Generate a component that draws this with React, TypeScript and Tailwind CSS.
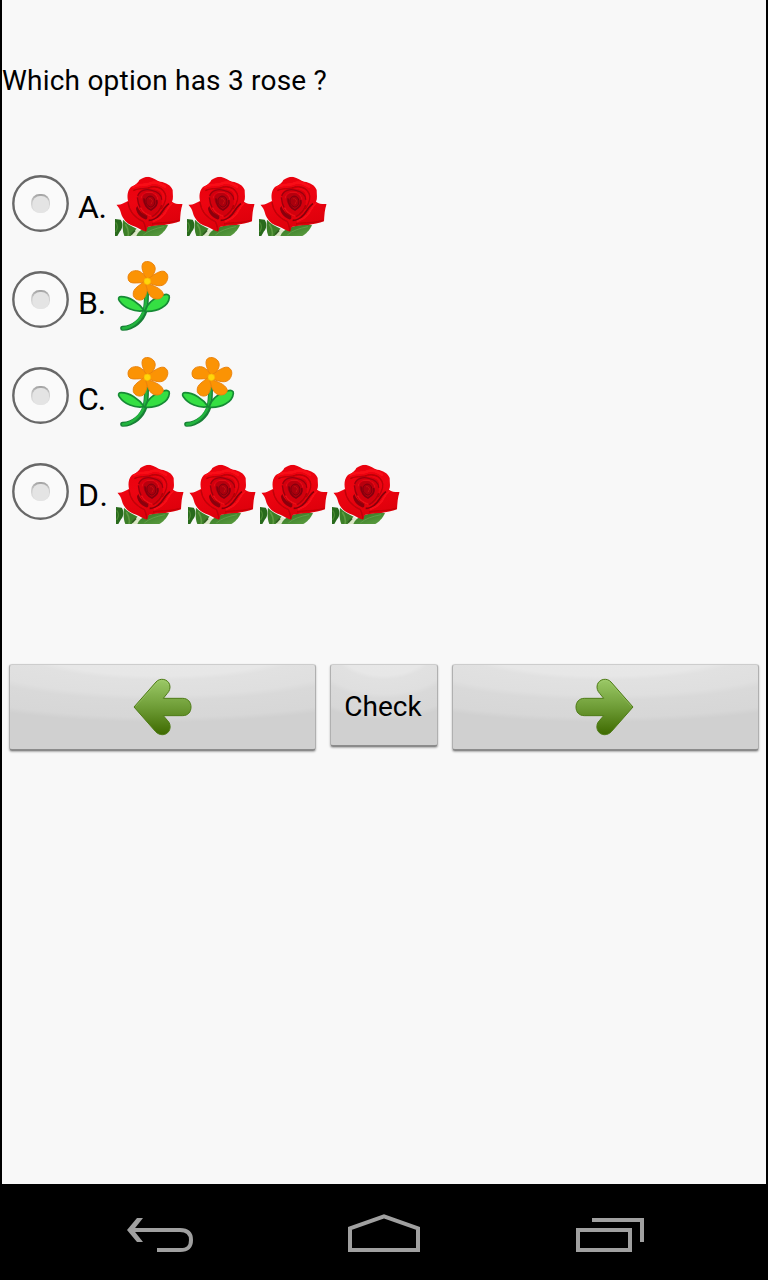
import React from "react";

function Rose() {
  return (
    <svg width="72" height="60" viewBox="15 18 216 180" className="block shrink-0">
      <defs>
        <linearGradient id="petal" x1="0" y1="0" x2="0.3" y2="1">
          <stop offset="0" stopColor="#e8000c" />
          <stop offset="0.5" stopColor="#ed0411" />
          <stop offset="1" stopColor="#de000b" />
        </linearGradient>
        <linearGradient id="roseLeaf" x1="0" y1="0" x2="1" y2="1">
          <stop offset="0" stopColor="#2f7420" />
          <stop offset="1" stopColor="#5fa043" />
        </linearGradient>
        <filter id="petalSoft" x="-10%" y="-10%" width="120%" height="120%">
          <feGaussianBlur stdDeviation="2" />
        </filter>
        <clipPath id="roseOutline">
          <path d="M62 52C72 46 82 42 88 30C98 25 108 19 118 21C131 24 140 32 151 35C167 37 184 46 188 60C188 74 191 86 186 95C196 102 207 103 218 102C212 116 211 137 210 154C197 160 176 163 163 165C143 164 129 168 113 171L108 185C98 181 86 175 76 170C59 165 47 157 39 143C31 132 35 120 19 104C31 106 43 98 54 93C51 78 52 64 62 52Z" />
        </clipPath>
      </defs>
      <path d="M15 147L32 149C39 158 39 175 30 184L22 198H15Z" fill="#286a1c" />
      <path d="M17 157C25 166 23 176 17 186" fill="none" stroke="#4b8a33" strokeWidth="4" />
      <path d="M39 149C48 160 64 168 80 176L66 198H43C37 184 37 166 39 149Z" fill="#3c7f27" />
      <path d="M46 162C53 173 58 184 54 198" fill="none" stroke="#5d9941" strokeWidth="5" />
      <path d="M62 198L79 176L98 185L90 198Z" fill="#dce7c8" />
      <path d="M63 194L75 181" stroke="#315e21" strokeWidth="5" />
      <path d="M79 198C89 174 124 162 174 165C167 181 155 193 145 198Z" fill="url(#roseLeaf)" />
      <path d="M100 195C115 182 136 175 162 170" fill="none" stroke="#609d48" strokeWidth="3" />
      <g clipPath="url(#roseOutline)">
        <path d="M15 18H220V190H15Z" fill="url(#petal)" />
        <g filter="url(#petalSoft)">
          <path d="M54 96C56 115 68 140 100 155C106 164 105 174 109 184" fill="none" stroke="#bd0008" strokeWidth="4" />
          <path d="M84 72C97 48 124 54 141 61C158 65 159 83 154 103C149 126 126 145 112 139C93 127 78 96 84 72Z" fill="#d30009" />
          <path d="M70 62C88 52 107 60 123 51C141 48 156 53 165 70C172 84 163 103 154 117" fill="none" stroke="#b90008" strokeWidth="4" />
          <path d="M66 52C85 39 102 49 119 41C134 34 151 40 168 52" fill="none" stroke="#f90d19" strokeWidth="8" />
          <path d="M83 78C89 60 109 56 125 61C144 65 155 75 155 89M82 82C84 108 97 132 114 137" fill="none" stroke="#9a000a" strokeWidth="4" />
          <path d="M96 77C103 61 125 63 139 75C148 89 141 111 125 120C106 117 96 98 96 77Z" fill="#b80009" />
          <path d="M94 86C94 72 104 67 117 66C133 66 145 79 143 91" fill="none" stroke="#df0713" strokeWidth="5" />
          <path d="M102 85C101 103 113 116 123 120C137 112 143 100 140 90" fill="none" stroke="#83000a" strokeWidth="5" />
          <path d="M109 86C116 73 133 78 134 91C137 103 129 111 121 111C110 107 105 95 109 86Z" fill="#a90009" stroke="#7a020a" strokeWidth="3" />
          <path d="M117 87C127 83 130 95 122 103" fill="none" stroke="#c70e17" strokeWidth="3" />
          <path d="M82 108C87 123 98 132 111 138C114 145 111 149 105 148C89 141 80 130 78 115Z" fill="#8b0008" />
          <path d="M91 112C98 127 109 134 124 139" fill="none" stroke="#e90915" strokeWidth="5" />
          <path d="M177 101C162 109 159 128 142 141C134 149 125 151 116 151" fill="none" stroke="#860008" strokeWidth="5" />
          <path d="M187 99C175 107 172 121 161 134C151 145 140 151 128 155" fill="none" stroke="#f70b18" strokeWidth="6" />
          <path d="M155 105C151 120 140 133 126 140" fill="none" stroke="#ad0008" strokeWidth="4" />
          <path d="M126 162C157 155 177 161 207 151" fill="none" stroke="#c30008" strokeWidth="4" />
        </g>
      </g>
    </svg>
  );
}

function Flower() {
  return (
    <svg width="64" height="72" viewBox="15 14 192 216" className="block shrink-0">
      <path d="M110 86C108 112 112 142 105 166C97 195 70 218 38 219" fill="none" stroke="#187f36" strokeWidth="15" strokeLinecap="round" />
      <path d="M109 94C108 123 111 145 102 167C91 195 65 217 39 219" fill="none" stroke="#22b43e" strokeWidth="8" strokeLinecap="round" />
      <path d="M103 166C86 142 59 124 33 124C25 124 24 130 28 136C42 157 74 172 103 166Z" fill="#35df43" stroke="#168a35" strokeWidth="5" />
      <path d="M105 168C111 143 135 127 160 119C171 115 179 118 178 126C176 151 144 171 105 168Z" fill="#35df43" stroke="#168a35" strokeWidth="5" />
      <g fill="#fb9304" stroke="#eb830c" strokeWidth="3">
        <path d="M106 78C109 62 90 43 98 25C104 15 124 17 132 29C143 45 126 62 117 78Z" />
        <path d="M111 85C92 77 65 90 56 76C49 58 62 45 80 46C97 47 103 64 114 72Z" />
        <path d="M109 73C125 65 146 44 162 48C180 56 174 78 163 87C147 98 127 84 113 85Z" />
        <path d="M117 80C111 99 112 119 100 131C90 138 74 133 70 121C66 96 91 93 106 73Z" />
        <path d="M106 82C122 89 154 96 160 116C159 129 144 134 130 129C113 120 112 98 105 82Z" />
      </g>
      <circle cx="112" cy="78" r="10" fill="#ffd60a" stroke="#f4b407" strokeWidth="2" />
    </svg>
  );
}

function Radio() {
  return (
    <svg width="58" height="58" viewBox="0 0 58 58" className="block shrink-0">
      <defs>
        <linearGradient id="radioDot" x1="0" y1="0" x2="0" y2="1">
          <stop stopColor="#a0a0a0" />
          <stop offset="0.45" stopColor="#cfcfcf" />
          <stop offset="1" stopColor="#e6e6e6" />
        </linearGradient>
      </defs>
      <circle cx="28.5" cy="29.5" r="27.2" fill="#fafafa" stroke="#686868" strokeWidth="2.4" />
      <rect x="19" y="20" width="19" height="19" rx="8.5" fill="url(#radioDot)" />
      <rect x="20.5" y="22" width="16.5" height="17" rx="7.5" fill="#e4e4e4" />
    </svg>
  );
}

function Arrow({ right = false }: { right?: boolean }) {
  return (
    <svg width="60" height="58" viewBox="399 69 180 174" className={right ? "mr-[3px] block -scale-x-100" : "block"}>
      <defs>
        <linearGradient id="arrowFill" x1="0" y1="0" x2="0" y2="1">
          <stop stopColor="#9bc967" />
          <stop offset="0.5" stopColor="#6f9d37" />
          <stop offset="1" stopColor="#3e6a00" />
        </linearGradient>
      </defs>
      <path d="M402 156L468 81C480 67 504 72 509 89C512 99 508 109 502 115L490 130H548C564 130 573 142 573 156C573 171 564 182 548 182H490L502 196C511 204 513 218 507 228C498 243 478 242 467 230Z" fill="url(#arrowFill)" stroke="#4e7b16" strokeWidth="3" strokeLinejoin="round" />
      <path d="M407 154L471 83C481 73 498 75 505 91" fill="none" stroke="#a7d077" strokeWidth="2" opacity=".6" />
    </svg>
  );
}

function GrayButton({ children, label, small = false }: { children: React.ReactNode; label: string; small?: boolean }) {
  return (
    <button
      aria-label={label}
      className={`flex shrink-0 items-center justify-center rounded-[3px] border border-t-[#cdcdcd] border-r-[#b0b0b0] border-b-2 border-b-[#8b8b8b] border-l-[#b0b0b0] bg-[radial-gradient(ellipse_110%_100%_at_50%_-30%,#e8e8e8_0%,#e7e7e7_43%,#e1e1e1_48%,#dfdfdf_66%,#d9d9d9_72%,#d7d7d7_92%,#d0d0d0_98%)] shadow-[0_1px_2px_rgba(0,0,0,.3)] ${small ? "h-[83px] w-[108px]" : "h-[87px] w-[307px]"}`}
    >
      {children}
    </button>
  );
}

const options = [
  { letter: "A.", flower: "rose", count: 3, labelClass: "w-9 tracking-[-0.4px]" },
  { letter: "B.", flower: "orange", count: 1, labelClass: "w-9 tracking-[-0.3px]" },
  { letter: "C.", flower: "orange", count: 2, labelClass: "w-9 tracking-[-1px]" },
  { letter: "D.", flower: "rose", count: 4, labelClass: "w-[37px] tracking-[2px]" },
];

export default function App() {
  return (
    <div className="flex h-[1280px] w-[768px] flex-col bg-black font-['Roboto',sans-serif] text-black">
      <main className="mx-[2px] h-[1184px] bg-[#f8f8f8]">
        <h1 className="h-[156px] pt-[65px] text-[28px] leading-8 font-normal tracking-[0.22px] whitespace-nowrap">Which option has 3 rose ?</h1>
        <div role="radiogroup">
          {options.map(({ letter, flower, count, labelClass }) => (
            <div key={letter} role="radio" aria-checked="false" className="flex h-24 items-start pl-[9.5px]">
              <div className="pt-[18px]"><Radio /></div>
              <span className={`ml-[8.5px] mr-px shrink-0 pt-8 text-[32px] leading-[38px] ${labelClass}`}>{letter}</span>
              <div className={`flex ${flower === "rose" ? "pt-5" : "pt-2"}`}>
                {Array.from({ length: count }, (_, i) => flower === "rose" ? <Rose key={i} /> : <Flower key={i} />)}
              </div>
            </div>
          ))}
        </div>
        <div className="mt-[124px] flex items-start gap-[14px] pl-[7px]">
          <GrayButton label="Previous"><Arrow /></GrayButton>
          <GrayButton label="Check" small><span className="mr-[2px] pt-[3px] text-[28px] leading-8">Check</span></GrayButton>
          <GrayButton label="Next"><Arrow right /></GrayButton>
        </div>
      </main>
      <nav className="flex h-24 items-start pt-[30px] pl-[126px]">
        <svg width="68" height="40" viewBox="0 0 68 40" fill="none" stroke="#a0a0a0" strokeWidth="4">
          <path d="M4 16H54C62 16 65 20 65 26C65 33 62 36 54 36H31" />
          <path d="M11 4H17L7.5 16L17 28H11L1 16Z" fill="#a0a0a0" stroke="none" />
        </svg>
        <svg width="72" height="40" viewBox="0 0 72 40" className="ml-[154px]" fill="none" stroke="#a0a0a0" strokeWidth="4">
          <path d="M2 14.4L36 2.3L70 14.4V36H2Z" />
        </svg>
        <svg width="68" height="40" viewBox="0 0 68 40" className="ml-[156px]" fill="none" stroke="#a0a0a0" strokeWidth="4">
          <path d="M2 16H54V36H2ZM16 6H66V28" />
        </svg>
      </nav>
    </div>
  );
}
